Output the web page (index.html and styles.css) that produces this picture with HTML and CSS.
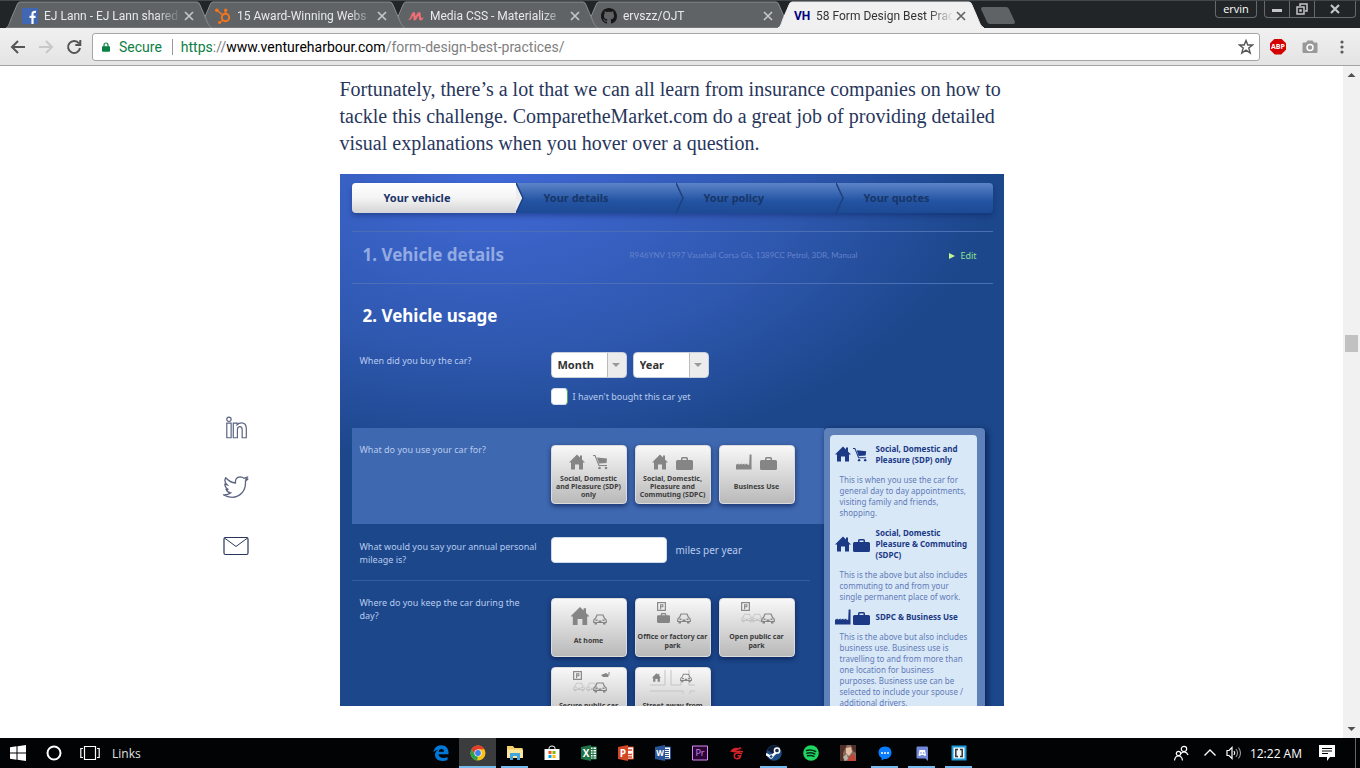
FILE: index.html
```
<!DOCTYPE html>
<html lang="en">
<head>
<meta charset="utf-8">
<title>58 Form Design Best Practices</title>
<link rel="stylesheet" href="styles.css">
</head>
<body>
<svg class="sprite" aria-hidden="true">
  <symbol id="tab-shape" viewBox="0 0 206 28"><path d="M0 28 C3 26 3 24 5 19 L11 5 Q12 2 14 2 H191 Q193 2 194 5 L200 19 C202 24 203 26 206 28Z"/></symbol>
  <symbol id="x" viewBox="0 0 10 10"><path d="M1 1 L9 9 M9 1 L1 9" stroke="currentColor" stroke-width="1.7"/></symbol>
  <symbol id="house" viewBox="0 0 16 15"><path fill="currentColor" d="M8 0 L11 3 V1 H13 V5 L16 8 H14 V15 H10 V10 H6 V15 H2 V8 H0Z"/></symbol>
  <symbol id="cart" viewBox="0 0 16 15"><path fill="none" stroke="currentColor" stroke-width="1.1" d="M0 1 H2 L6 11 H14"/><path fill="currentColor" d="M4 3 L14 4 L13.500 8.500 L6 9Z"/><circle cx="6.500" cy="13.500" r="1.300" fill="currentColor"/><circle cx="13" cy="13.500" r="1.300" fill="currentColor"/></symbol>
  <symbol id="case" viewBox="0 0 17 13"><path fill="currentColor" d="M5 3 V1.500 Q5 0 6.500 0 H10.500 Q12 0 12 1.500 V3 H15.500 Q17 3 17 4.500 V11.500 Q17 13 15.500 13 H1.500 Q0 13 0 11.500 V4.500 Q0 3 1.500 3Z M6.500 3 H10.500 V1.500 H6.500Z" fill-rule="evenodd"/></symbol>
  <symbol id="factory" viewBox="0 0 17 16"><path fill="currentColor" d="M0 16 V11 L3 9.500 V11 L6 9.500 V11 L9 9.500 V11 L12 9.500 V11 H14 L14.500 0 H16.500 V16Z"/></symbol>
  <symbol id="car" viewBox="0 0 14 11"><path fill="none" stroke="currentColor" stroke-width="1.200" d="M2.500 4.500 L4 1 H10 L11.500 4.500 Q13.300 5 13.300 7 V8.500 H.7 V7 Q.7 5 2.500 4.500Z"/><path fill="currentColor" d="M1.500 8 H4 V10.500 H1.500Z M10 8 H12.500 V10.500 H10Z M2.500 5.500 H4.500 V7 H2.500Z M9.500 5.500 H11.500 V7 H9.500Z M5.500 6.500 H8.500 V8.500 H5.500Z"/></symbol>
  <symbol id="parking" viewBox="0 0 10 10"><rect x=".7" y=".7" width="8.600" height="8.600" fill="none" stroke="currentColor" stroke-width="1.300"/><path fill="none" stroke="currentColor" stroke-width="1.200" d="M4 8 V3 H6.500 V5.300 H4"/></symbol>
</svg>

<header class="browser">
  <div class="tabstrip">
    <nav class="tabs" aria-label="Open tabs">
      <div class="tab">
        <svg class="tab-bg"><use href="#tab-shape"/></svg>
        <svg class="fav" viewBox="0 0 16 16"><path fill="#4267b2" d="M0 0H16V16H0Z"/><path fill="none" stroke="#fff" stroke-width="2.200" d="M10.500 16 V6 Q10.500 3.500 14 3.800 M7.500 8.800 H13.500"/></svg>
        <a class="tab-title" href="#t1">EJ Lann - EJ Lann shared</a>
        <button class="close" aria-label="Close tab"><svg viewBox="0 0 10 10"><use href="#x"/></svg></button>
      </div>
      <div class="tab">
        <svg class="tab-bg"><use href="#tab-shape"/></svg>
        <svg class="fav" viewBox="0 0 16 16"><g fill="none" stroke="#f5761a" stroke-width="1.500"><circle cx="10.500" cy="9.500" r="3.700" stroke-width="2"/><path d="M10.500 2 V6 M2 2.500 L8 7 M8 12 L5 14.500"/></g><g fill="#f5761a"><circle cx="10.700" cy="2.200" r="1.600"/><circle cx="1.800" cy="2.200" r="1.800"/><circle cx="4.500" cy="14.500" r="1.500"/></g></svg>
        <a class="tab-title" href="#t2">15 Award-Winning Webs</a>
        <button class="close" aria-label="Close tab"><svg viewBox="0 0 10 10"><use href="#x"/></svg></button>
      </div>
      <div class="tab">
        <svg class="tab-bg"><use href="#tab-shape"/></svg>
        <svg class="fav" viewBox="0 0 16 16"><path fill="#ee6e73" d="M0 12 C3 11 3 4 6 4 C8 4 7 8 7.500 8 C9 7 9 4 11.500 4 C13.500 4 12 10 14 10 Q15 10 16 9 C15 11 14 12.500 12.500 12.500 C10 12.500 11.500 8 10.500 8 C9 8.500 9 12.500 6.500 12.500 C4.500 12.500 6 8 5 8 C4 8.500 3.500 12.500 0 12Z"/></svg>
        <a class="tab-title" href="#t3">Media CSS - Materialize</a>
        <button class="close" aria-label="Close tab"><svg viewBox="0 0 10 10"><use href="#x"/></svg></button>
      </div>
      <div class="tab">
        <svg class="tab-bg"><use href="#tab-shape"/></svg>
        <svg class="fav" viewBox="0 0 16 16"><path fill="#181717" d="M8 0C3.580 0 0 3.580 0 8c0 3.540 2.290 6.530 5.470 7.590.4.070.55-.17.55-.38 0-.19-.01-.82-.01-1.490-2.010.37-2.530-.49-2.690-.94-.09-.23-.48-.94-.82-1.130-.28-.15-.68-.52-.01-.53.63-.01 1.080.58 1.230.82.720 1.210 1.870.87 2.330.66.070-.52.280-.87.510-1.070-1.780-.2-3.640-.89-3.640-3.950 0-.87.310-1.590.82-2.150-.08-.2-.36-1.020.08-2.120 0 0 .67-.21 2.200.82.640-.18 1.320-.27 2-.27s1.360.09 2 .27c1.530-1.040 2.200-.82 2.200-.82.440 1.100.160 1.920.080 2.120.510.560.820 1.270.820 2.150 0 3.070-1.870 3.750-3.650 3.950.290.250.540.730.540 1.480 0 1.070-.01 1.930-.01 2.200 0 .21.150.46.550.38A8.010 8.010 0 0 0 16 8c0-4.420-3.580-8-8-8z"/></svg>
        <a class="tab-title" href="#t4">ervszz/OJT</a>
        <button class="close" aria-label="Close tab"><svg viewBox="0 0 10 10"><use href="#x"/></svg></button>
      </div>
      <div class="tab tab-active">
        <svg class="tab-bg"><use href="#tab-shape"/></svg>
        <span class="fav fav-text">VH</span>
        <a class="tab-title" href="#t5" aria-current="page">58 Form Design Best Prac</a>
        <button class="close" aria-label="Close tab"><svg viewBox="0 0 10 10"><use href="#x"/></svg></button>
      </div>
    </nav>
    <button class="newtab" aria-label="New tab"><svg viewBox="0 0 34 17"><path d="M2 0 H25 Q27 0 28 2 L34 15 Q34 17 32 17 H9 Q7 17 6 15 L0 2 Q0 0 2 0Z"/></svg></button>
    <div class="window-buttons">
      <button class="profile">ervin</button>
      <div class="win-group">
        <button aria-label="Minimize"><svg viewBox="0 0 12 12"><path fill="#c3c5c7" d="M1 6H11V9H1Z"/></svg></button>
        <button aria-label="Restore"><svg viewBox="0 0 12 12"><path fill="none" stroke="#c3c5c7" stroke-width="1.500" d="M4 3V1H11V8H9 M1 4H8V11H1Z M4 7H5V8H4Z"/></svg></button>
        <button class="win-close" aria-label="Close"><svg viewBox="0 0 12 12"><path fill="none" stroke="#c3c5c7" stroke-width="2.200" d="M2 2L10 10M10 2L2 10"/></svg></button>
      </div>
    </div>
  </div>
  <div class="toolbar">
    <button class="tool" aria-label="Back"><svg viewBox="0 0 16 16"><path d="M15 8H2M8 2L2 8L8 14"/></svg></button>
    <button class="tool tool-off" aria-label="Forward"><svg viewBox="0 0 16 16"><path d="M1 8H14M8 2L14 8L8 14"/></svg></button>
    <button class="tool" aria-label="Reload"><svg viewBox="0 0 16 16"><path d="M13 4.500A6 6 0 1 0 14 9M14.300 1V6H9.300"/></svg></button>
    <div class="omnibox">
      <svg class="lock" viewBox="0 0 10 12"><path fill="#0b8043" d="M1 5H9Q10 5 10 6V11Q10 12 9 12H1Q0 12 0 11V6Q0 5 1 5Z"/><path fill="none" stroke="#0b8043" stroke-width="1.500" d="M2.500 6V3.500A2.500 2.500 0 0 1 7.500 3.500V6"/></svg>
      <span class="secure">Secure</span>
      <div class="url" role="textbox" tabindex="0" aria-label="Address"><span class="scheme">https</span>://<span class="host">www.ventureharbour.com</span>/form-design-best-practices/</div>
      <button class="star" aria-label="Bookmark"><svg viewBox="0 0 16 16"><path d="M8 1.500L9.800 6H14.600L10.800 9L12.200 14L8 11.200L3.800 14L5.200 9L1.400 6H6.200Z"/></svg></button>
    </div>
    <button class="ext abp" aria-label="Adblock Plus"><span>ABP</span></button>
    <button class="ext" aria-label="Capture"><svg viewBox="0 0 16 14"><path fill="#999" d="M1.500 2.500H4L5.500 0.500H10.500L12 2.500H14.500Q15.500 2.500 15.500 3.500V12Q15.500 13 14.500 13H1.500Q.5 13 .5 12V3.500Q.5 2.500 1.500 2.500Z"/><circle cx="8" cy="7.500" r="3" fill="none" stroke="#fff" stroke-width="1.500"/></svg></button>
    <button class="ext" aria-label="Menu"><svg viewBox="0 0 16 16"><g fill="#5a5a5a"><circle cx="8" cy="3" r="1.600"/><circle cx="8" cy="8" r="1.600"/><circle cx="8" cy="13" r="1.600"/></g></svg></button>
  </div>
</header>

<div class="viewport">
  <div class="page">
    <nav class="share" aria-label="Share">
      <a href="#linkedin" aria-label="LinkedIn"><svg viewBox="0 0 24 24"><g fill="none" stroke="#5b6480" stroke-width="1.100"><circle cx="5.500" cy="4" r="2"/><path d="M3.500 7.500H7.500V21H3.500Z M9.500 7.500H13V9Q14.500 7.200 17 7.200Q21.500 7.200 21.500 12.500V21H17.700V13.500Q17.700 10.800 15.600 10.800Q13.300 10.800 13.300 13.500V21H9.500Z"/></g></svg></a>
      <a href="#twitter" aria-label="Twitter"><svg viewBox="0 0 24 24"><path fill="none" stroke="#5b6480" stroke-width="1.200" d="M23.300 4.500L20.700 6.700C21.500 16 15 21.500 8.500 21.500Q4 21.500 .7 19.300Q4.500 19.500 7 17.500Q4 17 2.900 14.300H5Q1.800 12.700 1.700 9.500L3.700 10Q.6 7 2.500 3.500Q6.500 8 11.500 8.300Q11 3 15.800 2.600Q18 2.600 19.500 4L22.300 3L21.200 5Z"/></svg></a>
      <a href="#mail" aria-label="Email"><svg viewBox="0 0 26 26"><rect x="1" y="4.500" width="24" height="17" rx="1.500" fill="none" stroke="#28365c" stroke-width="1.200"/><path d="M1.500 5L13 13.500L24.500 5" fill="none" stroke="#28365c"/></svg></a>
    </nav>

    <main class="article">
      <p class="copy">Fortunately, there’s a lot that we can all learn from insurance companies on how to tackle this challenge. ComparetheMarket.com do a great job of providing detailed visual explanations when you hover over a question.</p>

      <form class="quote">
        <ol class="steps">
          <li class="step step-on">Your vehicle<svg viewBox="0 0 8 30"><path d="M0 0L7 15L0 30Z" fill="#ededee"/><path d="M0 0L7 15L0 30" fill="none" stroke="#1c3f86" stroke-width="1.500"/></svg></li>
          <li class="step">Your details<svg viewBox="0 0 8 30"><path d="M0 0L7 15L0 30" fill="none" stroke="#203f7c" stroke-width="1.500"/></svg></li>
          <li class="step">Your policy<svg viewBox="0 0 8 30"><path d="M0 0L7 15L0 30" fill="none" stroke="#203f7c" stroke-width="1.500"/></svg></li>
          <li class="step">Your quotes</li>
        </ol>
        <div class="summary">
          <h2 class="heading heading-done">1. Vehicle details</h2>
          <span class="vehicle">R946YNV 1997 Vauxhall Corsa Gls, 1389CC Petrol, 3DR, Manual</span>
          <a class="edit" href="#edit">Edit</a>
        </div>
        <h2 class="heading heading-now">2. Vehicle usage</h2>

        <div class="question question-bought">
          <label class="ask" for="month">When did you buy the car?</label>
          <div class="answer">
            <div class="selects">
              <span class="select"><select id="month"><option>Month</option></select></span>
              <span class="select"><select aria-label="Year"><option>Year</option></select></span>
            </div>
            <label class="check"><input type="checkbox">I haven't bought this car yet</label>
          </div>
        </div>

        <div class="lower">
          <div class="questions">
            <div class="question question-cards question-lit">
              <span class="ask">What do you use your car for?</span>
              <div class="answer cards">
                <button type="button" class="card"><span class="pics"><svg class="i16"><use href="#house"/></svg><svg class="i16"><use href="#cart"/></svg></span><span class="cap">Social, Domestic<br>and Pleasure (SDP)<br>only</span></button>
                <button type="button" class="card"><span class="pics"><svg class="i16"><use href="#house"/></svg><svg class="icase"><use href="#case"/></svg></span><span class="cap">Social, Domestic,<br>Pleasure and<br>Commuting (SDPC)</span></button>
                <button type="button" class="card"><span class="pics"><svg class="i16"><use href="#factory"/></svg><svg class="icase"><use href="#case"/></svg></span><span class="cap">Business Use</span></button>
              </div>
            </div>
            <div class="question question-miles">
              <label class="ask" for="miles">What would you say your annual personal mileage is?</label>
              <div class="answer miles"><input id="miles" type="text">miles per year</div>
            </div>
            <div class="question question-cards">
              <span class="ask">Where do you keep the car during the day?</span>
              <div class="answer cards">
                <button type="button" class="card"><span class="pics pics-near"><svg class="i20" viewBox="0 0 16 15"><use href="#house"/></svg><svg class="icar"><use href="#car"/></svg></span><span class="cap cap-loose">At home</span></button>
                <button type="button" class="card"><svg class="scene" viewBox="0 0 60 24"><use href="#parking" x="14" y="1" width="9" height="9"/><use href="#case" x="14" y="12" width="13" height="10"/><use href="#car" x="34" y="12" width="14" height="11"/></svg><span class="cap cap-loose">Office or factory car<br>park</span></button>
                <button type="button" class="card"><svg class="scene" viewBox="0 0 60 24"><use href="#parking" x="14" y="1" width="9" height="9"/><g opacity=".3"><use href="#car" x="14" y="12" width="12" height="10"/><use href="#car" x="24" y="12" width="12" height="10"/></g><use href="#car" x="34" y="12" width="14" height="11"/></svg><span class="cap cap-loose">Open public car<br>park</span></button>
                <button type="button" class="card"><svg class="scene" viewBox="0 0 60 24"><use href="#parking" x="14" y="1" width="9" height="9"/><path d="M42 5L47 3L50 5L49 7H44Z" fill="currentColor"/><path d="M50 5V2" stroke="currentColor"/><g opacity=".3"><use href="#car" x="14" y="12" width="12" height="10"/><use href="#car" x="27" y="12" width="12" height="10"/></g><use href="#car" x="34" y="12" width="14" height="11"/></svg><span class="cap cap-loose">Secure public car<br>park</span></button>
                <button type="button" class="card"><svg class="scene" viewBox="0 0 60 24"><use href="#house" x="9" y="3" width="9" height="9"/><path fill="none" stroke="#c4c4c4" d="M7 15H22V0M28 0V15H38V11M46 0V15H52M7 21H40V24M47 24V21H52"/><use href="#car" x="37" y="3" width="12" height="10"/></svg><span class="cap cap-loose">Street away from<br>home</span></button>
              </div>
            </div>
          </div>
          <aside class="info">
            <div class="info-body">
              <h3><span class="info-pics"><svg class="i16"><use href="#house"/></svg><svg class="i15"><use href="#cart"/></svg></span>Social, Domestic and Pleasure (SDP) only</h3>
              <p>This is when you use the car for general day to day appointments, visiting family and friends, shopping.</p>
              <h3><span class="info-pics"><svg class="i16"><use href="#house"/></svg><svg class="icase"><use href="#case"/></svg></span>Social, Domestic Pleasure &amp; Commuting (SDPC)</h3>
              <p>This is the above but also includes commuting to and from your single permanent place of work.</p>
              <h3><span class="info-pics"><svg class="i16"><use href="#factory"/></svg><svg class="icase"><use href="#case"/></svg></span>SDPC &amp; Business Use</h3>
              <p>This is the above but also includes business use. Business use is travelling to and from more than one location for business purposes. Business use can be selected to include your spouse / additional drivers.</p>
            </div>
          </aside>
        </div>
      </form>
    </main>
  </div>
  <div class="scrollbar" aria-hidden="true">
    <svg viewBox="0 0 17 17"><path d="M4.500 11L8.500 7L12.500 11Z"/></svg>
    <span class="thumb"></span>
    <svg viewBox="0 0 17 17"><path d="M4.500 6L8.500 10L12.500 6Z"/></svg>
  </div>
</div>

<footer class="taskbar">
  <div class="task-left">
    <button aria-label="Start"><svg viewBox="0 0 16 16"><path fill="#fff" d="M0 2.200L6.500 1.300V7.500H0Z M7.500 1.200L16 0V7.500H7.500Z M0 8.500H6.500V14.700L0 13.800Z M7.500 8.500H16V16L7.500 14.800Z"/></svg></button>
    <button aria-label="Cortana"><svg viewBox="0 0 16 16"><circle cx="8" cy="8" r="6.500" fill="none" stroke="#fff" stroke-width="2"/></svg></button>
    <button aria-label="Task view"><svg class="wide" viewBox="0 0 20 16"><path fill="none" stroke="#fff" stroke-width="1.200" d="M4.500 1.500H15.500V14.500H4.500Z M3 3.500H.8V12.500H3 M17 3.500H19.200V12.500H17"/></svg></button>
    <span class="links">Links</span>
  </div>
  <div class="apps">
    <button aria-label="Edge"><svg viewBox="0 0 16 16"><path fill="#0078d7" d="M.5 7.200C1 2.800 4.200.3 8.200.3C13 .3 15.500 3.500 15.500 7.500V9.300H5.500C5.700 12 8 13 10.300 13Q12.700 13 14.500 11.900V15Q12.500 16 9.500 16C4.800 16 2 13.500 2 9.800C2 7.500 3.300 5.500 5.300 4.500Q2.200 5 .5 7.200Z M5.600 6.700H11Q11 4 8.400 4Q6 4 5.600 6.700Z"/></svg></button>
    <button class="open current" aria-label="Chrome"><svg viewBox="0 0 16 16"><circle cx="8" cy="8" r="7.500" fill="#fbc116"/><path fill="#e33b2e" d="M1.500 4.300A7.500 7.500 0 0 1 14.500 4.300H8L5 10Z"/><path fill="#2ba24c" d="M1.500 4.300L5 9.700L8 11.500L7 15.500A7.500 7.500 0 0 1 1.500 4.300Z"/><circle cx="8" cy="8" r="3.600" fill="#fff"/><circle cx="8" cy="8" r="2.900" fill="#3c82f0"/></svg></button>
    <button class="open" aria-label="File Explorer"><svg viewBox="0 0 16 16"><path fill="#f4cf68" d="M0 1H6L7.500 3H15.500V13H0Z"/><path fill="#fce69a" d="M0 4.500H16V13H0Z"/><path fill="#41a5e1" d="M3 8H13V15H10V11H6V15H3Z"/></svg></button>
    <button aria-label="Store"><svg viewBox="0 0 16 16"><path fill="#fff" d="M.5 4H15.500V15H.5Z"/><path fill="none" stroke="#fff" d="M5 4V3Q5 1 8 1T11 3V4"/><path fill="#f25022" d="M4.500 6H7.500V9H4.500Z"/><path fill="#7fba00" d="M8.500 6H11.500V9H8.500Z"/><path fill="#00a4ef" d="M4.500 10H7.500V13H4.500Z"/><path fill="#ffb900" d="M8.500 10H11.500V13H8.500Z"/></svg></button>
    <button aria-label="Excel"><svg viewBox="0 0 16 16"><path fill="#fff" stroke="#1f7244" d="M9 2H15.500V14H9Z"/><path stroke="#1f7244" d="M9 4.500H15M9 7H15M9 9.500H15M9 12H15M12 2V14"/><path fill="#1f7244" d="M0 2L10 0V16L0 14Z"/><text x="5" y="12" text-anchor="middle">X</text></svg></button>
    <button aria-label="PowerPoint"><svg viewBox="0 0 16 16"><path fill="#fff" stroke="#d24726" d="M9 2H15.500V14H9Z"/><path stroke="#d24726" stroke-width="1.500" d="M10 5H14M10 9.500H14M10 12H14"/><path fill="#d24726" d="M0 2L10 0V16L0 14Z"/><text x="5" y="12" text-anchor="middle">P</text></svg></button>
    <button aria-label="Word"><svg viewBox="0 0 16 16"><path fill="#fff" stroke="#2a5699" d="M9 2H15.500V14H9Z"/><path stroke="#2a5699" d="M10 4.500H14M10 6.500H14M10 8.500H14M10 10.500H14M10 12.500H14"/><path fill="#2a5699" d="M0 2L10 0V16L0 14Z"/><text class="word" x="5" y="11" text-anchor="middle">W</text></svg></button>
    <button aria-label="Premiere"><svg viewBox="0 0 16 16"><path fill="#2a0634" stroke="#d98cf5" d="M.5 1H15.500V15H.5Z"/><text class="pr" x="8" y="11" text-anchor="middle">Pr</text></svg></button>
    <button aria-label="Garena"><svg viewBox="0 0 16 16"><path fill="#d8232a" d="M1 7Q4 2 9 3L12 2L11.500 3.500L14 4Q9 4 6 6Q9 5 14 6V7.500Q9 6.500 5 7.500Q3 6.500 1 7Z"/><path fill="none" stroke="#d8232a" stroke-width="1.600" d="M13 9Q8 6.500 5.500 9.500Q4.500 13.500 8 13.700Q11.500 13.500 11.500 10.800H8.500"/></svg></button>
    <button class="open" aria-label="Steam"><svg viewBox="0 0 16 16"><circle cx="8" cy="8" r="7.800" fill="#1b4b82"/><path fill="#0d1a33" d="M1 5A7.800 7.800 0 0 1 15 5L8 9Z"/><path fill="none" stroke="#fff" stroke-width="2.500" d="M0 9L5 12L10.500 7"/><circle cx="11" cy="5.500" r="2.600" fill="#1b2d4d" stroke="#fff" stroke-width="1.500"/><circle cx="5.200" cy="11.500" r="1.800" fill="#1b4b82" stroke="#fff"/></svg></button>
    <button aria-label="Spotify"><svg viewBox="0 0 16 16"><circle cx="8" cy="8" r="7.800" fill="#1ed760"/><path fill="none" stroke="#0b2b16" stroke-width="1.500" stroke-linecap="round" d="M3.500 5.500Q8 4 12.700 6.500M4 8.200Q8 7 11.800 9M4.500 10.800Q8 9.800 11 11.400"/></svg></button>
    <button aria-label="Game"><svg viewBox="0 0 16 16"><path fill="#8a6a5c" d="M0 0H16V16H0Z"/><path fill="#51302a" d="M0 0H7L3 8L4 16H0Z M11 0H16V8L13 6Z"/><path fill="#e7c1a5" d="M6 3L11 2L12 7L9 11L6 8Z"/><path fill="#c44437" d="M9 12L14 9L16 16H8Z"/><path fill="#b8b4aa" d="M3 12L7 9L8 14L5 16Z"/></svg></button>
    <button class="open" aria-label="Messenger"><svg viewBox="0 0 16 16"><path fill="#0a7cff" d="M8 1.500C3.500 1.500 1.500 4.500 1.500 7.500C1.500 10 2.700 11.800 4.500 13V15.500L7 14C12 14.300 14.500 11 14.500 7.700C14.500 4.500 12.500 1.500 8 1.500Z"/><g fill="#fff"><circle cx="5" cy="8" r="1"/><circle cx="8" cy="8" r="1"/><circle cx="11" cy="8" r="1"/></g></svg></button>
    <button class="open" aria-label="Discord"><svg viewBox="0 0 16 16"><path fill="#7289da" d="M3.500 1.500H13Q14 1.500 14 2.500V16L11.500 13.500H3.500Q2.500 13.500 2.500 12.500V2.500Q2.500 1.500 3.500 1.500Z"/><path fill="#fff" d="M5.500 5H11L12 10.500L10.500 11L9.500 10H7L6 11L4.500 10.500Z"/><circle cx="7" cy="8" r=".8" fill="#7289da"/><circle cx="9.700" cy="8" r=".8" fill="#7289da"/></svg></button>
    <button class="open" aria-label="Brackets"><svg viewBox="0 0 16 16"><path fill="#1d9bd8" d="M.5 .5H15.500V15.500H.5Z"/><path fill="#f2f6f8" d="M2.500 2.500H13.500V13.500H2.500Z"/><path fill="none" stroke="#333" stroke-width="1.500" d="M7 4.500H4.800V11.500H7M9 4.500H11.200V11.500H9"/></svg></button>
  </div>
  <div class="tray">
    <button class="people" aria-label="People"><svg viewBox="0 0 16 16"><g fill="none" stroke="#fff" stroke-width="1.200"><circle cx="11" cy="4" r="2.700"/><path d="M7.500 9Q9 7 11 7Q14 7 15 10"/><circle cx="5.500" cy="8.500" r="2.200"/><path d="M1.500 15.500Q2 11 5.500 11T9.500 15.500"/></g></svg></button>
    <button aria-label="Hidden icons"><svg viewBox="0 0 16 16"><path fill="none" stroke="#fff" stroke-width="1.400" d="M2.500 10.500L8 5L13.500 10.500"/></svg></button>
    <button aria-label="Volume"><svg viewBox="0 0 16 16"><path fill="none" stroke="#fff" stroke-width="1.200" d="M1 5.500H3L6 2.500V13.500L3 10.500H1Z M8 6Q9.500 8 8 10"/><path fill="none" stroke="#999" stroke-width="1.100" d="M10 4Q13 8 10 12M12.500 2.500Q16.500 8 12.500 13.500"/></svg></button>
    <time class="clock">12:22 AM</time>
    <button aria-label="Notifications"><svg viewBox="0 0 16 16"><path fill="#fff" d="M0 0H16V12H11L8 16V12H0Z"/><path stroke="#000" stroke-width="1.200" d="M3 3.500H13M3 6H13M3 8.500H9"/></svg></button>
    <span class="peek"></span>
  </div>
</footer>
</body>
</html>
```
FILE: styles.css
```
* { box-sizing: border-box; }
body {
  margin: 0;
  height: 100vh;
  display: flex;
  flex-direction: column;
  overflow: hidden;
  background: #fff;
  font-family: "Open Sans", "Noto Sans", sans-serif;
  font-size: 12px;
}
button { padding: 0; border: 0; background: none; font: inherit; color: inherit; }
a { color: inherit; text-decoration: none; }
svg { display: block; flex: none; }
.sprite { position: absolute; width: 0; height: 0; }

/* Tabs */
.tabstrip {
  display: flex;
  height: 28px;
  padding-left: 6px;
  background: #212528;
  border-top: 1px solid #45484b;
}
.tabs { display: flex; font-family: Roboto, "Open Sans", sans-serif; }
.tab {
  position: relative;
  isolation: isolate;
  display: flex;
  align-items: center;
  width: 193px;
  padding: 2px 5px 0 16px;
  color: #e8e9ea;
}
.tab:nth-child(1) { z-index: 5; }
.tab:nth-child(2) { z-index: 4; }
.tab:nth-child(3) { z-index: 3; }
.tab:nth-child(4) { z-index: 2; }
.tab.tab-active { z-index: 6; color: #333; }
.tab-bg {
  position: absolute;
  left: 0;
  bottom: 0;
  z-index: -1;
  width: 206px;
  height: 28px;
  fill: #5f6366;
  stroke: #8b8e90;
  stroke-width: 1;
}
.tab-active .tab-bg { fill: #f0f0f0; stroke: #f0f0f0; }
.fav { width: 16px; height: 16px; margin-right: 6px; }
.fav-text { flex: none; color: #000080; font-weight: 700; line-height: 16px; }
.tab-title {
  flex: 1;
  overflow: hidden;
  white-space: nowrap;
  mask-image: linear-gradient(90deg, #000 112px, transparent 138px);
}
.close { width: 10px; height: 10px; margin-left: 4px; color: #c4c6c8; }
.tab-active .close { color: #666; }
.close svg { width: 10px; height: 10px; }
.newtab { width: 34px; height: 17px; margin: 6px 0 0 10px; }
.newtab svg { width: 34px; height: 17px; fill: #5f6366; }
.window-buttons { display: flex; gap: 7px; margin-left: auto; padding-right: 4px; }
.profile, .win-group {
  height: 17px;
  border: 1px solid #66696c;
  border-top: 0;
  border-radius: 0 0 4px 4px;
  color: #fff;
}
.profile { width: 42px; font-size: 11px; line-height: 14px; }
.win-group { display: flex; width: 92px; }
.win-group button { display: grid; place-items: center; width: 25px; border-right: 1px solid #66696c; }
.win-group .win-close { flex: 1; border: 0; }
.win-group svg { width: 12px; height: 12px; }

/* Address row */
.toolbar {
  display: flex;
  align-items: center;
  gap: 12px;
  height: 38px;
  padding: 0 10px;
  background: linear-gradient(#f0f0f0, #e4e4e4);
  border-bottom: 1px solid #a3a3a3;
}
.tool svg { width: 16px; height: 16px; fill: none; stroke: #555; stroke-width: 2; }
.tool-off svg { stroke: #c8c8c8; }
.omnibox {
  flex: 1;
  display: flex;
  align-items: center;
  height: 28px;
  margin-left: -2px;
  padding: 0 5px 0 9px;
  background: #fff;
  border: 1px solid #a5a5a5;
  border-radius: 3px;
  color: #808080;
  font-family: Roboto, "Open Sans", sans-serif;
  font-size: 14px;
}
.lock { width: 8px; height: 12px; }
.secure { margin-left: 9px; padding-right: 10px; border-right: 1px solid #999; line-height: 16px; color: #0b8043; }
.url { flex: 1; margin-left: 8px; white-space: nowrap; }
.scheme { color: #0b8043; }
.host { color: #000; }
.star svg { width: 16px; height: 16px; fill: none; stroke: #555; stroke-width: 1.4; }
.ext { flex: none; width: 16px; height: 16px; margin-left: 4px; }
.ext svg { width: 16px; height: 16px; }
.ext.abp {
  margin: 0 0 0 -2px;
  background: #d40000;
  clip-path: polygon(30% 0, 70% 0, 100% 30%, 100% 70%, 70% 100%, 30% 100%, 0 70%, 0 30%);
  color: #fff;
  font-size: 7px;
  font-weight: 700;
  line-height: 16px;
}

/* Page area */
.viewport { flex: 1; min-height: 0; display: flex; }
.page {
  flex: 1;
  overflow: hidden;
  display: grid;
  grid-template-columns: 1fr minmax(0, 664px) 1fr;
}
.share { display: flex; flex-direction: column; align-items: flex-end; gap: 33px; padding: 349px 91px 0 0; }
.share svg { width: 26px; height: 26px; }
.copy {
  margin: 0;
  padding: 10px 0 17px;
  color: #28365c;
  font-family: Georgia, "Liberation Serif", serif;
  font-size: 20px;
  line-height: 27px;
}
.scrollbar {
  position: relative;
  display: flex;
  flex-direction: column;
  justify-content: space-between;
  width: 17px;
  background: #f1f1f1;
}
.scrollbar svg { width: 17px; height: 17px; fill: #505050; }
.thumb { position: absolute; top: 40%; left: 2px; width: 13px; height: 17px; background: #c1c1c1; }

/* Quote form */
.quote {
  aspect-ratio: 664 / 532;
  overflow: hidden;
  padding: 9px 11px 0 12px;
  background: #1c478b radial-gradient(500px 290px at 150px 0, #4169d6, #2f58b0 60%, #1c478b);
  color: #b9cbee;
  font-family: "Noto Sans", "Open Sans", sans-serif;
  font-size: 9px;
  line-height: 13px;
}
.steps {
  display: grid;
  grid-template-columns: 164fr 160fr 160fr 157fr;
  margin: 0 0 18px;
  padding: 0;
  list-style: none;
  border-radius: 4px;
  background: linear-gradient(#5b84c8, #2353a3 60%, #1d4a94);
  box-shadow: 0 3px 5px rgba(10, 30, 90, .4);
  color: #173668;
  font-size: 11px;
  font-weight: 700;
  line-height: 30px;
}
.step { position: relative; padding-left: 28px; }
.step svg { position: absolute; top: 0; left: 100%; width: 8px; height: 30px; }
.step-on {
  padding-left: 32px;
  border-radius: 4px 0 0 4px;
  background: linear-gradient(#fff, #f4f4f4 50%, #d4d4d6);
  color: #1b3468;
}
.summary {
  display: grid;
  grid-template-columns: 267px 1fr auto;
  align-items: center;
  height: 53px;
  padding: 0 16px 5px 11px;
  border: solid #4a6fb5;
  border-width: 1px 0;
}
.heading { margin: 0; font-size: 17px; line-height: 24px; color: #fff; }
.heading-done { color: #93abe2; }
.heading-now { padding: 20px 0 1px 11px; }
.vehicle { color: #6482cb; font-family: Lato, sans-serif; font-size: 8px; white-space: nowrap; }
.edit { color: #8fe08c; }
.edit::before {
  content: "";
  display: inline-block;
  margin-right: 5px;
  border: solid transparent;
  border-width: 3px 0 3px 6px;
  border-left-color: #c4f58a;
}
.question { display: grid; grid-template-columns: 191px 1fr; padding: 15px 0 0 8px; }
.ask { max-width: 180px; }
.question-bought { padding: 23px 0 23px 8px; }
.question-bought .ask { padding-top: 2px; }
.selects { display: flex; gap: 6px; margin-bottom: 10px; }
.select { position: relative; width: 76px; }
.select select {
  appearance: none;
  display: block;
  width: 100%;
  height: 26px;
  padding: 0 6px 2px;
  border: 1px solid #c9cfdc;
  border-radius: 4px;
  background: linear-gradient(90deg, #fff 55px, #bbb 55px, #bbb 56px, #ececec 56px);
  color: #333;
  font: 700 11px "Noto Sans", sans-serif;
}
.select::after {
  content: "";
  position: absolute;
  top: 11px;
  right: 7px;
  border: solid transparent;
  border-width: 4px 4px 0;
  border-top-color: #999;
}
.check { display: flex; align-items: center; gap: 5px; }
.check input {
  appearance: none;
  width: 17px;
  height: 17px;
  margin: 0;
  border: 1px solid #d5dde8;
  border-right-color: #54a860;
  border-radius: 4px;
  background: #fff;
}
.lower { display: grid; grid-template-columns: 1fr 161px; padding-right: 8px; }
.question-lit { padding-bottom: 20px; background: #3e68b0; }
.question-cards .answer { padding-top: 2px; }
.cards { display: grid; grid-template-columns: repeat(3, 76px); gap: 10px 8px; align-content: start; }
.card {
  display: flex;
  flex-direction: column;
  align-items: center;
  height: 59px;
  border: 1px solid #dcdcdc;
  border-radius: 4px;
  background: linear-gradient(#f8f8f8, #b9b9b9);
  box-shadow: 0 2px 5px rgba(0, 15, 60, .6);
  color: #858585;
}
.cap {
  flex: 1;
  display: flex;
  align-items: center;
  color: #3c3c3c;
  font-size: 7px;
  font-weight: 700;
  line-height: 8px;
  white-space: nowrap;
}
.cap-loose { line-height: 9px; }
.pics { display: flex; align-items: flex-end; gap: 8px; height: 24px; }
.pics-near { gap: 3px; height: 26px; }
.scene { width: 60px; height: 24px; margin-top: 2px; }
.i16 { width: 16px; height: 16px; }
.i15 { width: 15px; height: 15px; }
.i20 { width: 20px; height: 18px; }
.icase { width: 17px; height: 13px; }
.icar { width: 14px; height: 11px; }
.question-miles { margin-right: 14px; padding: 13px 0 14px 8px; border-bottom: 1px solid #355c9f; }
.question-miles .ask { padding-top: 3px; }
.miles { display: flex; align-items: flex-start; gap: 9px; font-size: 10px; line-height: 26px; }
.miles input { width: 116px; height: 26px; border: 1px solid #cfd8e8; border-radius: 4px; background: #fff; }
.info {
  padding: 7px 8px 0 6px;
  border-radius: 4px 4px 0 0;
  background: #5f81ba;
  box-shadow: 2px 2px 6px rgba(0, 15, 60, .7);
}
.info-body {
  padding: 8px 6px 0 10px;
  border-radius: 4px 4px 0 0;
  background: #d9e8f7;
  color: #5f7ab8;
  font-size: 8px;
  line-height: 11px;
}
.info h3 {
  position: relative;
  margin: 0 -6px 9px 0;
  padding-left: 36px;
  color: #1b3985;
  font-size: 8px;
  line-height: 11px;
}
.info-pics { position: absolute; top: 50%; left: -5px; display: flex; align-items: flex-end; gap: 2px; transform: translateY(-50%); }
.info p { margin: 0 0 9px; }

/* Taskbar */
.taskbar { display: flex; justify-content: space-between; height: 30px; background: #020304; color: #fff; }
.taskbar button { display: grid; place-items: center; }
.taskbar svg { width: 16px; height: 16px; }
.task-left { display: flex; align-items: center; width: 422px; }
.task-left button { width: 36px; }
.taskbar .wide { width: 20px; }
.links { margin-left: 4px; color: #e0e0e0; }
.apps { display: flex; flex: 1; }
.apps button { width: 37px; position: relative; }
.apps .open::after {
  content: "";
  position: absolute;
  right: 5px;
  bottom: 0;
  left: 5px;
  height: 2px;
  background: #76b9ed;
}
.apps .current { background: #3a3c3d; }
.apps .current::after { right: 0; left: 0; }
.apps text { fill: #fff; font: 700 10px "Open Sans", sans-serif; }
.apps .word { font-size: 8px; }
.apps .pr { fill: #d98cf5; font-weight: 400; font-size: 9px; }
.tray { display: flex; align-items: center; gap: 6px; }
.tray button { width: 18px; }
.tray .people { margin-right: 5px; }
.clock { margin: 0 10px 0 1px; }
.peek { align-self: stretch; width: 5px; margin-left: 13px; border-left: 1px solid #666; }
```
